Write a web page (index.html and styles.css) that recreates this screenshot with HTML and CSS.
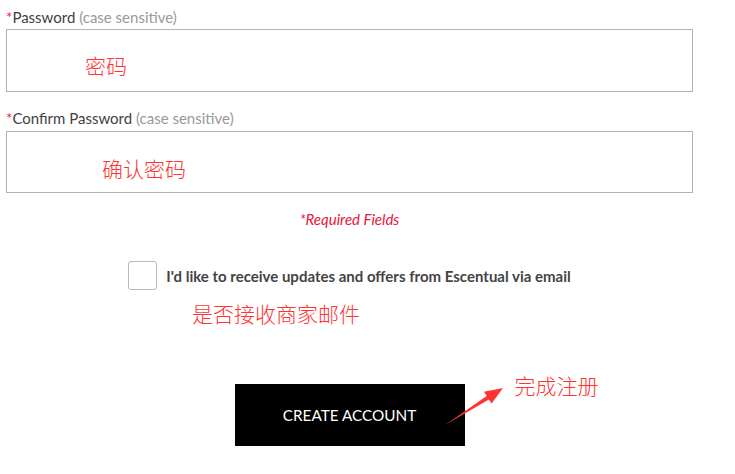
FILE: index.html
```html
<!DOCTYPE html>
<html lang="en">
<head>
<meta charset="utf-8">
<title>Create Account</title>
<link rel="stylesheet" href="styles.css">
</head>
<body>
<form class="form">
  <div class="field">
    <label class="label"><span class="req">*</span>Password <span class="hint">(case sensitive)</span></label>
    <div class="input input-pw"><span class="note">密码</span></div>
  </div>
  <div class="field field-2">
    <label class="label"><span class="req">*</span>Confirm Password <span class="hint">(case sensitive)</span></label>
    <div class="input input-confirm"><span class="note">确认密码</span></div>
  </div>
  <p class="required">*Required Fields</p>
  <div class="optin">
    <div class="optin-row">
      <span class="checkbox"></span>
      <span class="optin-text">I'd like to receive updates and offers from Escentual via email</span>
    </div>
    <div class="note optin-note">是否接收商家邮件</div>
  </div>
  <div class="actions">
    <div class="btn-wrap">
      <button type="button" class="btn">CREATE ACCOUNT</button>
      <div class="callout">
        <svg class="arrow" width="70" height="50" viewBox="0 0 70 50"><polygon points="5,45 46.7,16 44,11.8 63,8 51.6,23.6 48.9,19.4" fill="#f33"/></svg>
        <span class="note callout-text">完成注册</span>
      </div>
    </div>
  </div>
</form>
</body>
</html>
```

FILE: styles.css
```css
html, body {
  margin: 0;
  padding: 0;
  background: #fff;
}
body {
  font-family: Lato, "Open Sans", Arial, sans-serif;
  color: #444;
}
.form {
  width: 687px;
  padding: 7px 0 0 6px;
}
.field {
  display: flex;
  flex-direction: column;
}
.field-2 {
  margin-top: 16px;
}
.label {
  font-size: 15px;
  line-height: 20px;
  margin-bottom: 2px;
  color: #3f3f3f;
}
.field-2 .label {
  margin-bottom: 3px;
}
.req {
  color: #e8163b;
}
.hint {
  color: #999;
}
.input {
  box-sizing: border-box;
  border: 1px solid #b3b3b3;
  height: 63px;
  display: flex;
  align-items: flex-end;
}
.input-pw {
  padding: 0 0 14px 78px;
}
.input-confirm {
  height: 62px;
  padding: 0 0 12px 95px;
}
.note {
  font-family: "Noto Sans CJK SC", sans-serif;
  font-weight: 300;
  font-size: 21px;
  line-height: 24px;
  color: #f33;
}
.required {
  margin: 16px 0 0;
  text-align: center;
  font-style: italic;
  font-size: 15px;
  line-height: 20px;
  color: #e8163b;
}
.optin {
  margin-top: 32px;
  display: flex;
  flex-direction: column;
  align-items: center;
}
.optin-row {
  display: flex;
  align-items: center;
  gap: 9px;
}
.checkbox {
  box-sizing: border-box;
  width: 29px;
  height: 29px;
  border: 1px solid #b8b8b8;
  border-radius: 3px;
  background: #fff;
}
.optin-text {
  font-weight: bold;
  font-size: 15px;
  color: #444;
}
.optin-note {
  align-self: flex-start;
  margin: 11px 0 0 186px;
}
.actions {
  margin-top: 59px;
  display: flex;
  justify-content: center;
}
.btn-wrap {
  position: relative;
}
.btn {
  display: block;
  width: 230px;
  height: 62px;
  border: 0;
  background: #000;
  color: #fff;
  font-family: Lato, "Open Sans", Arial, sans-serif;
  font-size: 15.3px;
  padding: 0;
  cursor: pointer;
}
.callout {
  position: absolute;
  left: 205px;
  top: -6px;
  width: 200px;
  height: 60px;
}
.arrow {
  position: absolute;
  left: 0;
  top: 2px;
}
.callout-text {
  position: absolute;
  left: 75px;
  top: -5px;
  white-space: nowrap;
}
```
